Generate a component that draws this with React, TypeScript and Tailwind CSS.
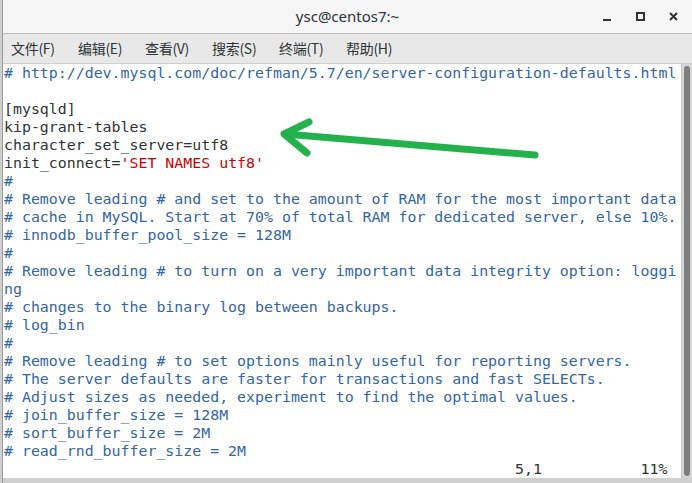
import * as React from "react";

type Seg = { t: string; c?: "b" | "r" | "k" };

const blue = "text-[#3465a4]";

const lines: Seg[][] = [
  [{ t: "# http://dev.mysql.com/doc/refman/5.7/en/server-configuration-defaults.html", c: "b" }],
  [{ t: " " }],
  [{ t: "[mysqld]" }],
  [{ t: "kip-grant-tables" }],
  [{ t: "character_set_server=utf8" }],
  [{ t: "init_connect=" }, { t: "'SET NAMES utf8'", c: "r" }],
  [{ t: "#", c: "b" }],
  [{ t: "# Remove leading # and set to the amount of RAM for the most important data", c: "b" }],
  [{ t: "# cache in MySQL. Start at 70% of total RAM for dedicated server, else 10%.", c: "b" }],
  [{ t: "# innodb_buffer_pool_size = 128M", c: "b" }],
  [{ t: "#", c: "b" }],
  [{ t: "# Remove leading # to turn on a very important data integrity option: loggi", c: "b" }],
  [{ t: "ng", c: "b" }],
  [{ t: "# changes to the binary log between backups.", c: "b" }],
  [{ t: "# log_bin", c: "b" }],
  [{ t: "#", c: "b" }],
  [{ t: "# Remove leading # to set options mainly useful for reporting servers.", c: "b" }],
  [{ t: "# The server defaults are faster for transactions and fast SELECTs.", c: "b" }],
  [{ t: "# Adjust sizes as needed, experiment to find the optimal values.", c: "b" }],
  [{ t: "# join_buffer_size = 128M", c: "b" }],
  [{ t: "# sort_buffer_size = 2M", c: "b" }],
  [{ t: "# read_rnd_buffer_size = 2M", c: "b" }],
];

const menus = ["文件(F)", "编辑(E)", "查看(V)", "搜索(S)", "终端(T)", "帮助(H)"];

function segClass(c?: Seg["c"]) {
  if (c === "b") return blue;
  if (c === "r") return "text-[#cc0000]";
  return "text-[#2e3436]";
}

export default function App() {
  return (
    <div className="relative w-[692px] h-[483px] overflow-hidden bg-[#cfcfcf] flex flex-col">
      <div className="flex flex-col flex-1 ml-[2px] border-l border-[#9a9a9a]">
        {/* Title bar */}
        <div className="relative h-[34px] shrink-0 bg-[#f5f5f5] border-b border-[#bcbcbc] flex items-center justify-center">
          <span
            className="text-[15px] text-[#2e3436] pb-[1px]"
            style={{ fontFamily: '"Noto Sans", "DejaVu Sans", sans-serif' }}
          >
            ysc@centos7:~
          </span>
          <div className="absolute right-[14px] top-0 h-full flex items-center gap-[24px]">
            <div className="w-[9px] h-[9px] flex items-end">
              <div className="w-[8px] h-[2px] bg-[#2e3436]" />
            </div>
            <div className="w-[9px] h-[9px] border-2 border-[#2e3436]" />
            <svg width="9" height="9" viewBox="0 0 9 9">
              <path d="M1 1L8 8M8 1L1 8" stroke="#2e3436" strokeWidth="2" />
            </svg>
          </div>
        </div>

        {/* Menu bar */}
        <div
          className="h-[29px] shrink-0 bg-[#e8e8e8] flex items-center gap-[15px] pl-[8px] text-[14px] text-[#2e3436]"
          style={{ fontFamily: '"Noto Sans CJK SC", "DejaVu Sans", sans-serif' }}
        >
          {menus.map((m) => (
            <span key={m} className="w-[52px] tracking-[-0.3px]">
              {m}
            </span>
          ))}
        </div>

        {/* Terminal */}
        <div className="flex h-[415px] shrink-0 bg-white border-t border-[#d0d0d0]">
          <div
            className="flex-1 pl-[1px] text-[14.9px] leading-[18px] whitespace-pre overflow-hidden"
            style={{ fontFamily: '"DejaVu Sans Mono", "Liberation Mono", monospace' }}
          >
            {lines.map((segs, i) => (
              <div key={i} className="h-[18px]">
                {segs.map((s, j) => (
                  <span key={j} className={segClass(s.c)}>
                    {s.t}
                  </span>
                ))}
              </div>
            ))}
            <div className="h-[18px] text-[#2e3436]">
              {" ".repeat(57) + "5,1" + " ".repeat(11) + "11%"}
            </div>
          </div>
          <div className="w-[11px] shrink-0 bg-[#d6d6d6] border-l border-[#c4c4c4] flex justify-center py-[2px]">
            <div className="w-[6px] h-full rounded-full bg-[#7e7e7e]" />
          </div>
        </div>
      </div>

      {/* Green annotation arrow */}
      <svg className="absolute left-0 top-0 pointer-events-none" width="692" height="483">
        <g stroke="#23b14d" strokeWidth="7" strokeLinecap="round" strokeLinejoin="round" fill="none">
          <path d="M535 155L285 134" />
          <path d="M309 122L284 134L307 153" />
        </g>
      </svg>
    </div>
  );
}
